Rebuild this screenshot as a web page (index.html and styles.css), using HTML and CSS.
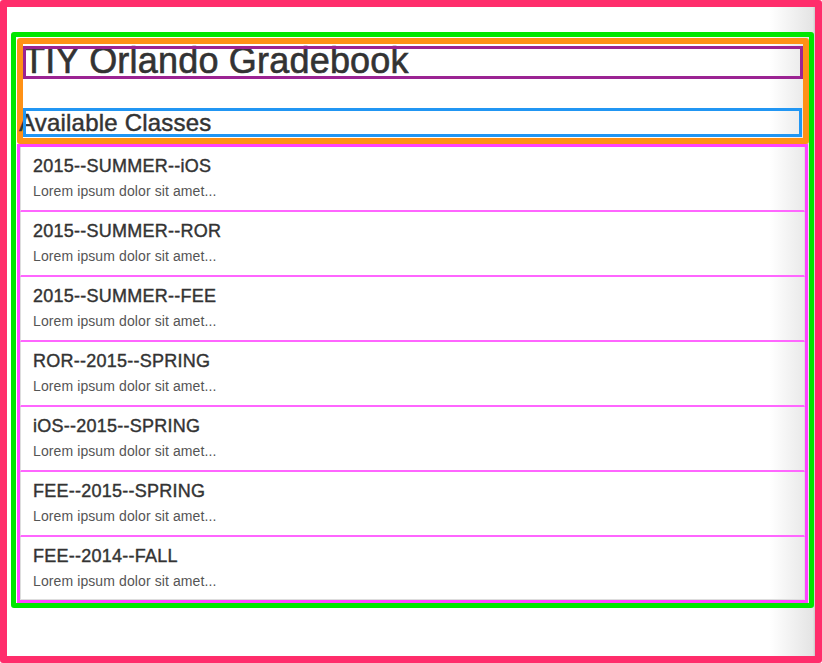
FILE: index.html
```html
<!DOCTYPE html>
<html lang="en">
<head>
<meta charset="utf-8">
<title>TIY Orlando Gradebook</title>
<link rel="stylesheet" href="styles.css">
</head>
<body>
  <div class="container">
    <header class="header">
      <h1 class="title">TIY Orlando Gradebook</h1>
      <h2 class="subtitle">Available Classes</h2>
    </header>
    <ul class="list">
      <li class="item"><h4 class="item-heading">2015--SUMMER--iOS</h4><p class="item-text">Lorem ipsum dolor sit amet...</p></li>
      <li class="item"><h4 class="item-heading">2015--SUMMER--ROR</h4><p class="item-text">Lorem ipsum dolor sit amet...</p></li>
      <li class="item"><h4 class="item-heading">2015--SUMMER--FEE</h4><p class="item-text">Lorem ipsum dolor sit amet...</p></li>
      <li class="item"><h4 class="item-heading">ROR--2015--SPRING</h4><p class="item-text">Lorem ipsum dolor sit amet...</p></li>
      <li class="item"><h4 class="item-heading">iOS--2015--SPRING</h4><p class="item-text">Lorem ipsum dolor sit amet...</p></li>
      <li class="item"><h4 class="item-heading">FEE--2015--SPRING</h4><p class="item-text">Lorem ipsum dolor sit amet...</p></li>
      <li class="item item-last"><h4 class="item-heading">FEE--2014--FALL</h4><p class="item-text">Lorem ipsum dolor sit amet...</p></li>
    </ul>
  </div>
</body>
</html>
```

FILE: styles.css
```css
html {
  background: #fff;
}

* {
  box-sizing: border-box;
}

body {
  margin: 0;
  height: 663px;
  border: 7px solid #ff2d6b;
  border-radius: 3px;
  padding-top: 25px;
  font-family: "Liberation Sans", Arial, Helvetica, sans-serif;
  color: #333;
  background: linear-gradient(to right, #fff 0, #fff calc(100% - 45px), #e4e4e4 calc(100% - 2px), #c8c8c8 100%);
  overflow: hidden;
}

.container {
  margin: 0 1px 0 4px;
  border: 5px solid #00e600;
  border-radius: 3px;
  padding: 1px 0 0 1px;
}

.header {
  border: 6px solid #ff9116;
  border-radius: 3px;
}

.title {
  margin: 2px 0 0 0;
  padding: 3px 3px 7px 0;
  font-size: 36px;
  font-weight: 500;
  line-height: 23px;
  letter-spacing: 0.2px;
  -webkit-text-stroke: 0.6px #333;
  outline: 3px solid #9b2393;
  outline-offset: -3px;
  color: #333;
  white-space: nowrap;
}

.subtitle {
  margin: 29px 1px 1px 0;
  padding: 3px 3px 3px 0;
  font-size: 24px;
  font-weight: 500;
  line-height: 23px;
  letter-spacing: 0.2px;
  -webkit-text-stroke: 0.45px #333;
  text-indent: -4px;
  outline: 3px solid #2196f3;
  outline-offset: -3px;
  color: #333;
  white-space: nowrap;
}

.list {
  list-style: none;
  margin: 0 1px 0 0;
  padding: 0;
  border: 3px solid #ff44ff;
}

.item {
  padding: 10px 12px;
  height: 65px;
  border-bottom: 2px solid #ff66ff;
  border-left: 1px solid #ddd;
  border-right: 1px solid #ddd;
}

.item-last {
  height: 63px;
  border-bottom: 1px solid #ddd;
}

.item-heading {
  margin: 0 0 5px 0;
  font-size: 18px;
  font-weight: 500;
  line-height: 19.8px;
  letter-spacing: 0.25px;
  -webkit-text-stroke: 0.4px #333;
  color: #333;
}

.item-text {
  margin: 0;
  font-size: 14px;
  line-height: 18.2px;
  letter-spacing: 0.1px;
  color: #555;
}
```
